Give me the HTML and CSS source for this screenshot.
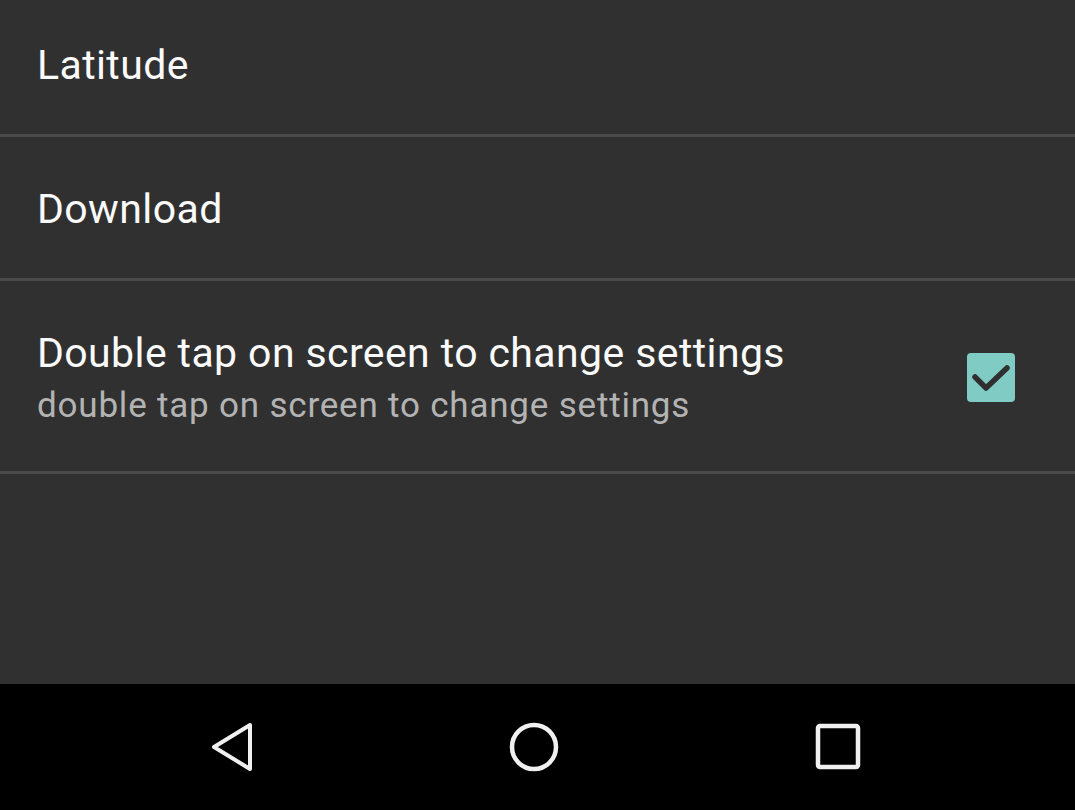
FILE: index.html
```html
<!DOCTYPE html>
<html>
<head>
<meta charset="utf-8">
<link rel="stylesheet" href="styles.css">
</head>
<body>
<div class="screen">
  <div class="list">
    <div class="row row-1"><span class="title">Latitude</span></div>
    <div class="sep"></div>
    <div class="row row-2"><span class="title">Download</span></div>
    <div class="sep"></div>
    <div class="row row-3">
      <div class="texts">
        <div class="title">Double tap on screen to change settings</div>
        <div class="summary">double tap on screen to change settings</div>
      </div>
      <div class="checkbox">
        <svg width="48" height="49" viewBox="0 0 48 49">
          <rect x="0" y="0" width="48" height="49" rx="4" fill="#80cbc4"/>
          <path d="M8 24 L19 35 L40 15" fill="none" stroke="#2f2f2f" stroke-width="5.5" stroke-linecap="round" stroke-linejoin="round"/>
        </svg>
      </div>
    </div>
    <div class="sep"></div>
  </div>
  <div class="nav">
    <svg class="nav-icon" width="44" height="52" viewBox="0 0 44 52">
      <path d="M40 4 L40 48 L4 26 Z" fill="none" stroke="#f0f0f0" stroke-width="4" stroke-linejoin="round"/>
    </svg>
    <svg class="nav-icon" width="52" height="52" viewBox="0 0 52 52">
      <circle cx="26" cy="26" r="22" fill="none" stroke="#f0f0f0" stroke-width="4.5"/>
    </svg>
    <svg class="nav-icon" width="52" height="52" viewBox="0 0 52 52">
      <rect x="5" y="5" width="40" height="41" rx="2" fill="none" stroke="#f0f0f0" stroke-width="4.5"/>
    </svg>
  </div>
</div>
</body>
</html>
```

FILE: styles.css
```css
html, body {
  margin: 0;
  padding: 0;
  background: #303030;
}
.screen {
  width: 1075px;
  height: 810px;
  display: flex;
  flex-direction: column;
  background: #303030;
  font-family: Roboto, "Noto Sans", sans-serif;
  overflow: hidden;
}
.list {
  flex: 1;
  display: flex;
  flex-direction: column;
}
.row {
  display: flex;
  align-items: center;
  padding-left: 37px;
  box-sizing: border-box;
}
.row-1 { height: 134px; padding-bottom: 4px; }
.row-2 { height: 141px; padding-top: 2px; }
.row-3 { height: 190px; padding-right: 60px; justify-content: space-between; }
.sep {
  height: 3px;
  background: #4a4a4a;
}
.title {
  color: #fafafa;
  font-size: 41px;
  letter-spacing: 0.4px;
  line-height: 48px;
}
.summary {
  color: #b3b3b3;
  font-size: 35px;
  letter-spacing: 0.8px;
  line-height: 44px;
  margin-top: 7px;
}
.texts {
  margin-top: 4px;
}
.checkbox {
  display: flex;
  margin-top: 2px;
}
.checkbox svg { display: block; }
.nav {
  height: 126px;
  background: #000;
  display: flex;
  align-items: center;
  justify-content: space-between;
  padding: 0 210px 0 210px;
}
.nav-icon { display: block; }
```
